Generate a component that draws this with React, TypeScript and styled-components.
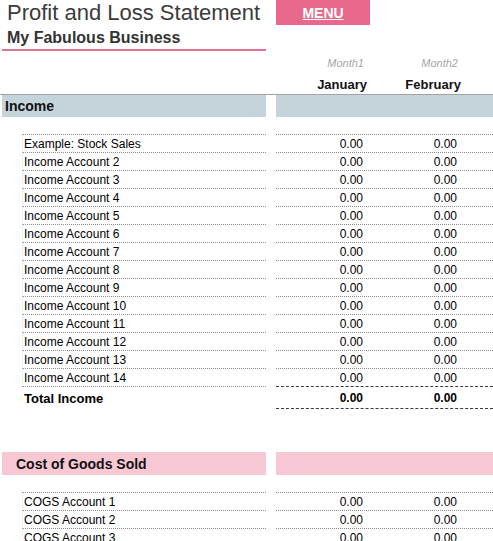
import React from "react";
import styled, { createGlobalStyle } from "styled-components";

const Global = createGlobalStyle`
  html, body { margin: 0; padding: 0; background: #ffffff; }
  body { font-family: "Liberation Sans", Arial, sans-serif; overflow: hidden; }
  * { box-sizing: border-box; }
`;

const Page = styled.div`
  width: 493px;
  height: 541px;
  overflow: hidden;
  color: #000;
`;

const TopBar = styled.div`
  display: flex;
  height: 25px;
`;

const Title = styled.h1`
  margin: 0;
  width: 266px;
  padding-left: 7px;
  font-size: 22px;
  font-weight: normal;
  line-height: 25px;
  color: #3b3b3b;
  white-space: nowrap;
`;

const Gap = styled.div`
  width: 10px;
  flex: none;
`;

const MenuButton = styled.a`
  width: 94px;
  height: 25px;
  background: #e8698c;
  color: #ffffff;
  font-weight: bold;
  font-size: 14px;
  display: flex;
  align-items: center;
  justify-content: center;
  text-decoration: underline;
  cursor: pointer;
`;

const Subtitle = styled.h2`
  margin: 3px 0 0 0;
  padding-left: 7px;
  font-size: 16px;
  font-weight: bold;
  line-height: 20px;
  color: #333333;
`;

const TitleRule = styled.div`
  margin: 1px 0 0 2px;
  width: 264px;
  height: 2px;
  background: #df7491;
`;

const HeadRow = styled.div<{ $top: number; $height: number }>`
  display: flex;
  padding-left: 276px;
  margin-top: ${(p) => p.$top}px;
  height: ${(p) => p.$height}px;
`;

const MonthCell = styled.div`
  width: 94px;
  text-align: right;
  padding-right: 6px;
  font-size: 11px;
  font-style: italic;
  line-height: 18px;
  color: #a6a6a6;
`;

const NameCell = styled.div`
  width: 94px;
  text-align: right;
  padding-right: 3px;
  font-size: 13px;
  font-weight: bold;
  line-height: 18px;
  color: #111;
`;

const HeaderRule = styled.div`
  height: 1px;
  background: #a3a3a3;
`;

const Band = styled.div<{ $top: number; $height: number }>`
  display: flex;
  margin-top: ${(p) => p.$top}px;
  height: ${(p) => p.$height}px;
`;

const BandLabel = styled.div<{ $bg: string; $indent: number }>`
  margin-left: 2px;
  width: 264px;
  background: ${(p) => p.$bg};
  padding-left: ${(p) => p.$indent}px;
  font-size: 14px;
  font-weight: bold;
  display: flex;
  align-items: center;
  color: #111;
`;

const BandFill = styled.div<{ $bg: string }>`
  flex: 1;
  margin-left: 10px;
  background: ${(p) => p.$bg};
`;

const Spacer = styled.div<{ $h: number }>`
  height: ${(p) => p.$h}px;
`;

const Row = styled.div<{ $height: number }>`
  display: flex;
  height: ${(p) => p.$height}px;
`;

const Label = styled.div<{ $total?: boolean }>`
  margin-left: 22px;
  width: 244px;
  border-top: 1px dotted #8c8c8c;
  border-left: 1px dotted ${(p) => (p.$total ? "transparent" : "#e2e2e2")};
  padding-left: 1px;
  font-size: ${(p) => (p.$total ? 13 : 12)}px;
  font-weight: ${(p) => (p.$total ? "bold" : "normal")};
  display: flex;
  align-items: center;
  white-space: nowrap;
`;

const Nums = styled.div<{ $total?: boolean }>`
  flex: 1;
  margin-left: 10px;
  display: flex;
  border-top: 1px ${(p) => (p.$total ? "dashed #3a3a3a" : "dotted #8c8c8c")};
  border-bottom: ${(p) => (p.$total ? "1px dashed #3a3a3a" : "none")};
`;

const Num = styled.div<{ $total?: boolean }>`
  width: 94px;
  text-align: right;
  padding-right: 7px;
  font-size: 12px;
  font-weight: ${(p) => (p.$total ? "bold" : "normal")};
  display: flex;
  align-items: center;
  justify-content: flex-end;
`;

const incomeRows = [
  "Example: Stock Sales",
  ...Array.from({ length: 13 }, (_, i) => `Income Account ${i + 2}`),
];
const cogsRows = Array.from({ length: 3 }, (_, i) => `COGS Account ${i + 1}`);

const LineRow = ({ label }: { label: string }) => (
  <Row $height={18}>
    <Label>{label}</Label>
    <Nums>
      <Num>0.00</Num>
      <Num>0.00</Num>
    </Nums>
  </Row>
);

export default function App() {
  return (
    <Page>
      <Global />
      <TopBar>
        <Title>Profit and Loss Statement</Title>
        <Gap />
        <MenuButton>MENU</MenuButton>
      </TopBar>
      <Subtitle>My Fabulous Business</Subtitle>
      <TitleRule />
      <HeadRow $top={3} $height={18}>
        <MonthCell>Month1</MonthCell>
        <MonthCell>Month2</MonthCell>
      </HeadRow>
      <HeadRow $top={4} $height={18}>
        <NameCell>January</NameCell>
        <NameCell>February</NameCell>
      </HeadRow>
      <HeaderRule />
      <Band $top={0} $height={22}>
        <BandLabel $bg="#c5d3db" $indent={3}>Income</BandLabel>
        <BandFill $bg="#c5d3db" />
      </Band>
      <Spacer $h={17} />
      {incomeRows.map((r) => (
        <LineRow key={r} label={r} />
      ))}
      <Row $height={23}>
        <Label $total>Total Income</Label>
        <Nums $total>
          <Num $total>0.00</Num>
          <Num $total>0.00</Num>
        </Nums>
      </Row>
      <Band $top={43} $height={23}>
        <BandLabel $bg="#f7c8d4" $indent={14}>Cost of Goods Sold</BandLabel>
        <BandFill $bg="#f7c8d4" />
      </Band>
      <Spacer $h={17} />
      {cogsRows.map((r) => (
        <LineRow key={r} label={r} />
      ))}
    </Page>
  );
}
